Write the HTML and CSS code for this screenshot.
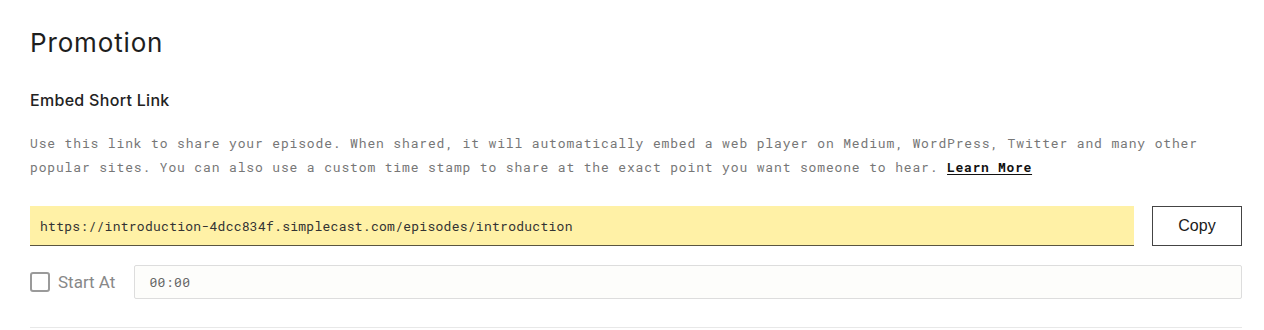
FILE: index.html
```html
<!DOCTYPE html>
<html>
<head>
<meta charset="utf-8">
<link rel="stylesheet" href="styles.css">
</head>
<body>
<section class="promo">
  <h1 class="promo-title">Promotion</h1>
  <h2 class="promo-sub">Embed Short Link</h2>
  <p class="promo-desc">Use this link to share your episode. When shared, it will automatically embed a web player on Medium, WordPress, Twitter and many other popular sites. You can also use a custom time stamp to share at the exact point you want someone to hear. <a class="learn" href="#">Learn More</a></p>
  <div class="link-row">
    <div class="link-field">https://introduction-4dcc834f.simplecast.com/episodes/introduction</div>
    <button class="copy-btn">Copy</button>
  </div>
  <div class="start-row">
    <label class="start-label"><span class="checkbox"></span><span class="start-text">Start At</span></label>
    <div class="time-field">00:00</div>
  </div>
  <div class="divider"></div>
</section>
</body>
</html>
```

FILE: styles.css
```css
html, body {
  margin: 0;
  padding: 0;
  background: #ffffff;
}
body {
  font-family: "Inter", "Liberation Sans", sans-serif;
  color: #222;
}
.promo {
  padding: 0 22px 0 30px;
}
.promo-title {
  margin: 0;
  padding-top: 28px;
  font-family: "Inter", sans-serif;
  font-weight: 400;
  font-size: 26px;
  line-height: 30px;
  letter-spacing: 0.85px;
  color: #1e1e1e;
}
.promo-sub {
  margin: 0;
  padding-top: 32px;
  font-family: "Inter", sans-serif;
  font-weight: 500;
  font-size: 16px;
  line-height: 20px;
  letter-spacing: 0.3px;
  color: #222;
}
.promo-desc {
  margin: 21px 0 0;
  font-family: "Roboto Mono", "DejaVu Sans Mono", monospace;
  font-size: 13px;
  line-height: 24px;
  letter-spacing: 0.85px;
  color: #777;
}
.learn {
  color: #111;
  font-weight: 700;
  letter-spacing: 0.7px;
  text-decoration: underline;
  text-underline-offset: 2px;
}
.link-row {
  display: flex;
  gap: 18px;
  margin-top: 27px;
  height: 40px;
}
.link-field {
  flex: 1;
  box-sizing: border-box;
  background: #fff1a6;
  border-bottom: 1px solid #5a5540;
  padding: 0 10px;
  display: flex;
  align-items: center;
  font-family: "Roboto Mono", "DejaVu Sans Mono", monospace;
  font-size: 13px;
  letter-spacing: 0.27px;
  color: #333;
}
.copy-btn {
  width: 90px;
  box-sizing: border-box;
  background: #fff;
  border: 1px solid #444;
  border-radius: 0;
  font-family: "Liberation Sans", Arial, sans-serif;
  font-size: 16px;
  color: #1a1a1a;
  padding: 0;
}
.start-row {
  display: flex;
  align-items: center;
  gap: 19px;
  margin-top: 19px;
}
.start-label {
  display: flex;
  align-items: center;
  gap: 8px;
}
.checkbox {
  width: 20px;
  height: 20px;
  box-sizing: border-box;
  border: 2px solid #9a9a9a;
  border-radius: 3px;
  background: #fff;
}
.start-text {
  font-family: "Roboto", sans-serif;
  font-size: 17px;
  color: #888;
}
.time-field {
  flex: 1;
  box-sizing: border-box;
  height: 34px;
  border: 1px solid #ddd;
  border-radius: 2px;
  background: #fdfdfb;
  display: flex;
  align-items: center;
  padding: 0 14px;
  font-family: "Roboto Mono", "DejaVu Sans Mono", monospace;
  font-size: 13px;
  letter-spacing: 0.4px;
  color: #666;
}
.divider {
  margin-top: 28px;
  height: 1px;
  background: #e8e8e8;
}
```
